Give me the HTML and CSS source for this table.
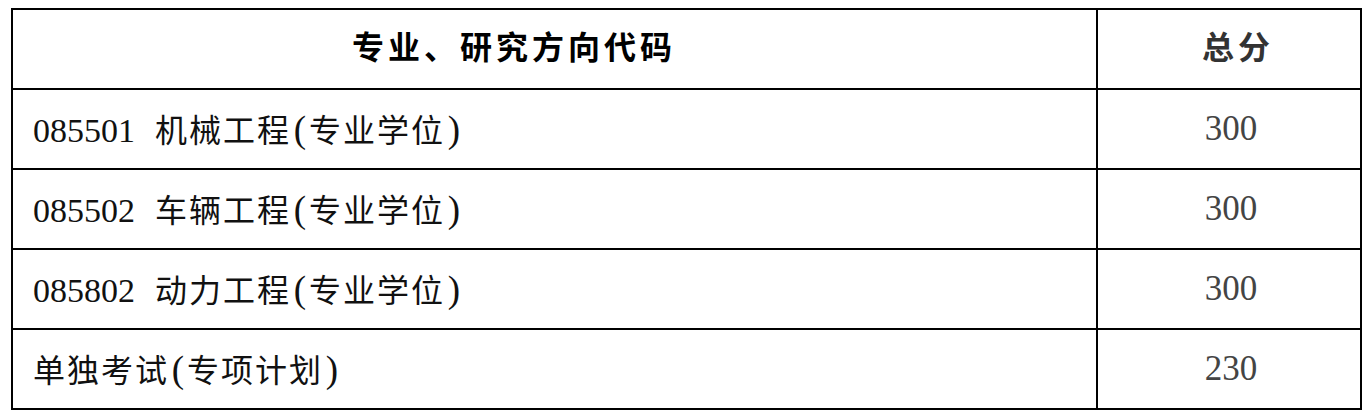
FILE: index.html
```html
<!DOCTYPE html>
<html lang="zh">
<head>
<meta charset="utf-8">
<link rel="stylesheet" href="styles.css">
</head>
<body>
<table class="score-table">
  <tr class="head-row">
    <th class="col-major"><span class="head-major">专业、研究方向代码</span></th>
    <th class="col-score"><span class="head-score">总分</span></th>
  </tr>
  <tr class="body-row">
    <td class="col-major"><span class="code">085501</span><span class="name">机械工程<span class="paren">(</span>专业学位<span class="paren">)</span></span></td>
    <td class="col-score num">300</td>
  </tr>
  <tr class="body-row">
    <td class="col-major"><span class="code">085502</span><span class="name">车辆工程<span class="paren">(</span>专业学位<span class="paren">)</span></span></td>
    <td class="col-score num">300</td>
  </tr>
  <tr class="body-row">
    <td class="col-major"><span class="code">085802</span><span class="name">动力工程<span class="paren">(</span>专业学位<span class="paren">)</span></span></td>
    <td class="col-score num">300</td>
  </tr>
  <tr class="body-row">
    <td class="col-major"><span class="name">单独考试<span class="paren">(</span>专项计划<span class="paren">)</span></span></td>
    <td class="col-score num">230</td>
  </tr>
</table>
</body>
</html>
```

FILE: styles.css
```css
html, body {
  margin: 0;
  padding: 0;
  background: #ffffff;
}
body {
  padding: 8px 0 0 11px;
}
.score-table {
  border-collapse: collapse;
  width: 1349px;
  table-layout: fixed;
}
.score-table th,
.score-table td {
  border: 2px solid #000;
  padding: 0;
  vertical-align: middle;
}
.col-major { width: 1083px; }
.col-score { width: 262px; }
.head-row { height: 80px; }
.body-row { height: 80px; }
.score-table th {
  font-family: "Noto Sans CJK SC", "Noto Sans", sans-serif;
  font-weight: 700;
  font-size: 32px;
  letter-spacing: 4px;
  text-align: left;
  line-height: 1;
}
.head-major {
  display: block;
  padding-left: 339px;
  color: #000;
  position: relative;
  top: -4px;
}
.head-score {
  display: block;
  padding-left: 104px;
  color: #333;
  position: relative;
  top: -4px;
}
.score-table td.col-major {
  padding-left: 20px;
  color: #111;
  font-size: 32px;
  line-height: 1;
}
.code {
  font-family: "Liberation Serif", serif;
  font-size: 34px;
  margin-right: 20px;
}
.name {
  font-family: "Noto Sans CJK SC", sans-serif;
  font-weight: 400;
  font-size: 32px;
  letter-spacing: 2px;
}
.paren {
  display: inline-block;
  width: 18px;
  text-align: center;
  letter-spacing: 0;
  font-family: "Liberation Serif", serif;
  font-size: 37px;
  line-height: 1;
}
.num {
  font-family: "Liberation Serif", serif;
  font-size: 35px;
  color: #444;
  text-align: center;
  padding-left: 4px !important;
}
```
